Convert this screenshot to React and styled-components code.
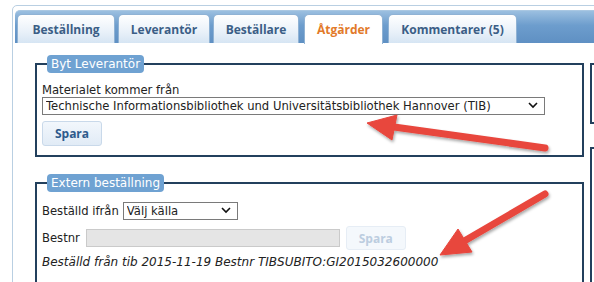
import React from "react";
import styled, { createGlobalStyle } from "styled-components";

const GlobalStyle = createGlobalStyle`
  html, body {
    margin: 0;
    padding: 0;
    background: #ffffff;
    overflow: hidden;
  }
  body {
    font-family: "DejaVu Sans", "Open Sans", sans-serif;
    font-size: 11.6px;
    color: #222222;
  }
`;

const Page = styled.div`
  position: relative;
  width: 594px;
  height: 282px;
  padding: 5px 0 0 12px;
  box-sizing: border-box;
  overflow: hidden;
`;

const Panel = styled.div`
  width: 700px;
  height: 320px;
  border: 1px solid #b9cfe2;
  border-radius: 5px;
  padding: 4px 0 0 2px;
  box-sizing: border-box;
  background: #ffffff;
`;

const TabBar = styled.div`
  display: flex;
  align-items: flex-end;
  gap: 3px;
  height: 33px;
  padding: 0 0 0 2px;
  box-sizing: border-box;
  border-radius: 5px 0 0 0;
  border-top: 1px solid #a9c7e2;
  background: linear-gradient(#9bbfe0, #6d9dcd 45%, #5f90c3);
`;

const Tab = styled.div`
  width: ${({ $w }) => $w}px;
  display: flex;
  align-items: center;
  justify-content: center;
  box-sizing: border-box;
  border: 1px solid #8fb2d4;
  border-bottom: none;
  border-radius: 5px 5px 0 0;
  font-family: "Open Sans", sans-serif;
  font-weight: 700;
  font-size: 12px;
  white-space: nowrap;
  color: ${({ $active }) => ($active ? "#e27a2a" : "#3b5e86")};
  background: ${({ $active }) =>
    $active ? "#ffffff" : "linear-gradient(#ffffff, #e9f1f9 60%, #d6e5f3)"};
  height: ${({ $active }) => ($active ? "30px" : "29px")};
  margin-bottom: ${({ $active }) => ($active ? "-1px" : "0")};
  margin-left: ${({ $active }) => ($active ? "2px" : "0")};
  margin-right: ${({ $active }) => ($active ? "2px" : "0")};
`;

const Content = styled.div`
  display: flex;
  gap: 6px;
  padding: 12px 0 0 20px;
`;

const MainCol = styled.div`
  width: 549px;
  flex: 0 0 549px;
  display: flex;
  flex-direction: column;
  gap: 17px;
`;

const SideCol = styled.div`
  flex: 0 0 120px;
  display: flex;
  flex-direction: column;
  gap: 23px;
  padding-top: 8px;
`;

const SideBox = styled.div`
  height: ${({ $h }) => $h}px;
  border: 2px solid #23405d;
  border-right: none;
`;

const Fieldset = styled.fieldset`
  margin: 0;
  border: 2px solid #23405d;
  padding: ${({ $pad }) => $pad};
  min-width: 0;
`;

const Legend = styled.legend`
  margin-left: 5px;
  padding: 0 4px;
  height: 18px;
  line-height: 18px;
  background: #6fa2d2;
  color: #ffffff;
  font-size: 12px;
  border-radius: 4px;
`;

const Label = styled.div`
  line-height: 14px;
`;

const SelectWrap = styled.div`
  position: relative;
  width: ${({ $w }) => $w}px;
  height: 18px;
`;

const Select = styled.select`
  appearance: none;
  width: 100%;
  height: 18px;
  margin: 0;
  padding: 0 20px 0 3px;
  border: 1px solid #7a7a7a;
  border-radius: 0;
  background: #ffffff;
  font-family: inherit;
  font-size: 11.6px;
  color: #222222;
  box-sizing: border-box;
`;

const Chevron = styled.svg`
  position: absolute;
  right: 7px;
  top: 5px;
  pointer-events: none;
`;

const Button = styled.button`
  width: 60px;
  height: ${({ $h }) => $h}px;
  padding: 0;
  border: 1px solid ${({ disabled }) => (disabled ? "#e6edf5" : "#c9d9ea")};
  border-radius: 3px;
  background: ${({ disabled }) =>
    disabled ? "#f4f8fc" : "linear-gradient(#f2f7fc, #e1ebf6)"};
  color: ${({ disabled }) => (disabled ? "#bccde0" : "#2e5b8c")};
  font-family: "Open Sans", sans-serif;
  font-weight: 700;
  font-size: 12px;
`;

const Row = styled.div`
  display: flex;
  align-items: center;
  gap: ${({ $gap }) => $gap}px;
  margin-top: ${({ $mt }) => $mt || 0}px;
`;

const TextInput = styled.input`
  width: 254px;
  height: 18px;
  margin: 0;
  padding: 0;
  border: 1px solid #cacaca;
  background: #e5e5e5;
  box-sizing: border-box;
`;

const Status = styled.div`
  margin-top: 4px;
  font-style: italic;
  font-size: 12px;
  line-height: 16px;
`;

const Overlay = styled.svg`
  position: absolute;
  left: 0;
  top: 0;
  pointer-events: none;
`;

const ChevronIcon = () => (
  <Chevron width="10" height="7" viewBox="0 0 10 7">
    <path d="M1 1l4 4 4-4" fill="none" stroke="#111" strokeWidth="1.6" />
  </Chevron>
);

const tabs = [
  { label: "Beställning", w: 98 },
  { label: "Leverantör", w: 92 },
  { label: "Beställare", w: 86 },
  { label: "Åtgärder", w: 79, active: true },
  { label: "Kommentarer (5)", w: 129 },
];

const arrows = [
  { tail: [545, 148], base: [394, 127], head: "367,123 397,115 392,140" },
  { tail: [545, 194], base: [466, 240], head: "440,255 458,229 472,252" },
];

const App = () => (
  <>
    <GlobalStyle />
    <Page>
      <Panel>
        <TabBar>
          {tabs.map(t => (
            <Tab key={t.label} $w={t.w} $active={t.active}>
              {t.label}
            </Tab>
          ))}
        </TabBar>
        <Content>
          <MainCol>
            <Fieldset $pad="10px 5px 9px 5px">
              <Legend>Byt Leverantör</Legend>
              <Label>Materialet kommer från</Label>
              <SelectWrap $w={503}>
                <Select defaultValue="tib">
                  <option value="tib">
                    Technische Informationsbibliothek und Universitätsbibliothek Hannover (TIB)
                  </option>
                </Select>
                <ChevronIcon />
              </SelectWrap>
              <Row $gap={0} $mt={6}>
                <Button $h={25}>Spara</Button>
              </Row>
            </Fieldset>
            <Fieldset $pad="10px 5px 12px 5px">
              <Legend>Extern beställning</Legend>
              <Row $gap={4}>
                <Label>Beställd ifrån</Label>
                <SelectWrap $w={115}>
                  <Select defaultValue="">
                    <option value="">Välj källa</option>
                  </Select>
                  <ChevronIcon />
                </SelectWrap>
              </Row>
              <Row $gap={6} $mt={6}>
                <Label>Bestnr</Label>
                <TextInput type="text" />
                <Button $h={24} disabled>
                  Spara
                </Button>
              </Row>
              <Status>Beställd från tib 2015-11-19 Bestnr TIBSUBITO:GI2015032600000</Status>
            </Fieldset>
          </MainCol>
          <SideCol>
            <SideBox $h={57} />
            <SideBox $h={200} />
          </SideCol>
        </Content>
      </Panel>
      <Overlay width="594" height="282" viewBox="0 0 594 282">
        <defs>
          <filter id="shadow" x="-20%" y="-40%" width="140%" height="180%">
            <feDropShadow dx="1" dy="2" stdDeviation="1.5" floodColor="#000" floodOpacity="0.35" />
          </filter>
        </defs>
        {arrows.map((a, i) => (
          <g key={i} filter="url(#shadow)" fill="#e8463d" stroke="#e8463d">
            <line
              x1={a.tail[0]}
              y1={a.tail[1]}
              x2={a.base[0]}
              y2={a.base[1]}
              strokeWidth="7"
              strokeLinecap="round"
            />
            <polygon points={a.head} strokeWidth="1" strokeLinejoin="round" />
          </g>
        ))}
      </Overlay>
    </Page>
  </>
);

export default App;
